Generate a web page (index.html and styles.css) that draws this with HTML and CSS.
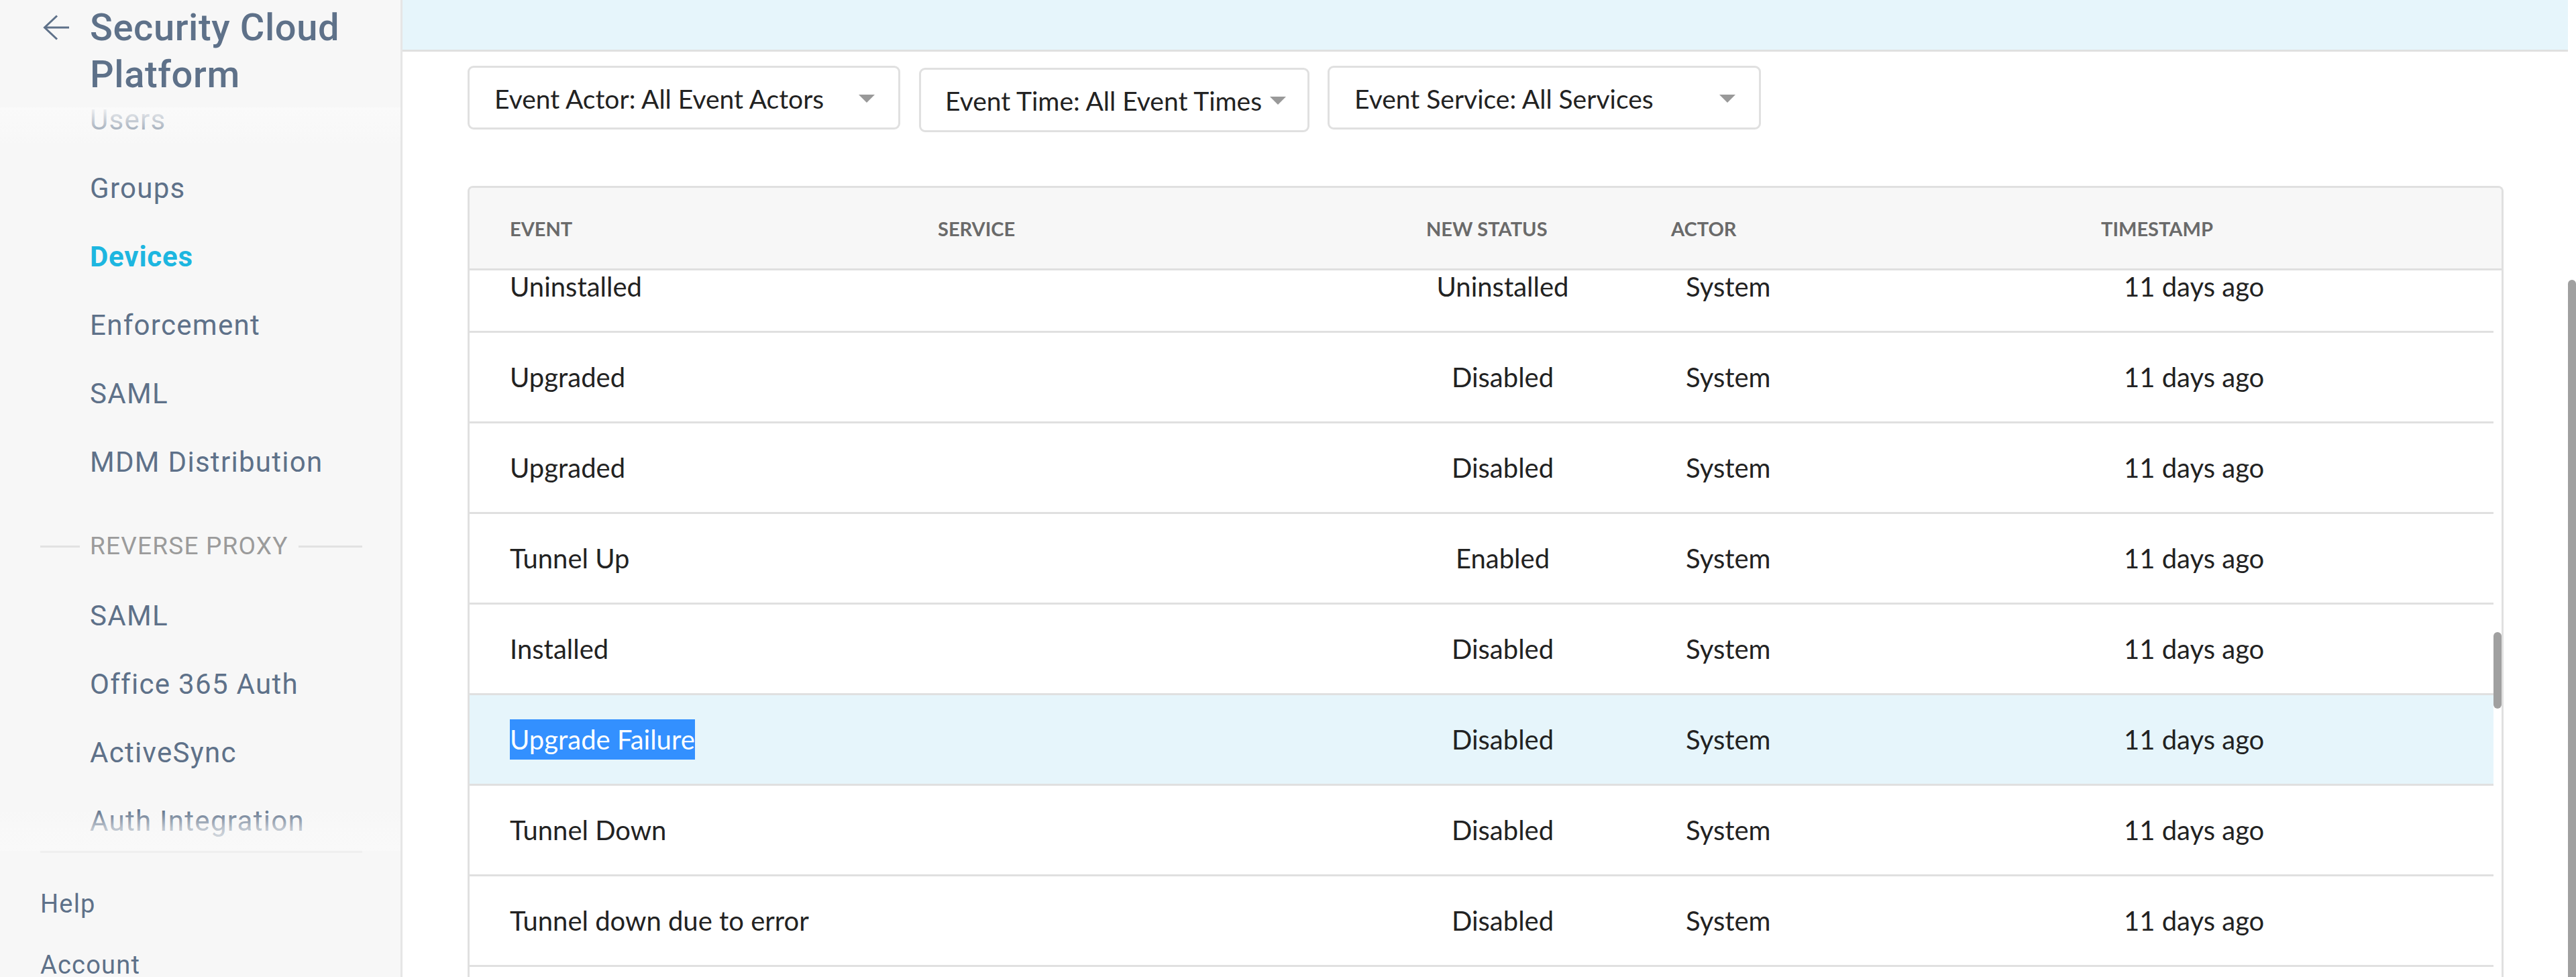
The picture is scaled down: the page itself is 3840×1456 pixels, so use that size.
FILE: index.html
```html
<!DOCTYPE html>
<html lang="en">
<head>
<meta charset="utf-8">
<title>Security Cloud Platform – Device Events</title>
<link rel="stylesheet" href="styles.css">
</head>
<body>
<div class="app">
  <aside class="sidebar">
    <div class="brand">
      <svg class="back" viewBox="0 0 40 40" width="40" height="40" aria-hidden="true">
        <path d="M39 19H2.5M21 1.5L2.5 19L21 36.5" fill="none" stroke="currentColor" stroke-width="3"/>
      </svg>
      <h1 class="brand-title">Security Cloud<br>Platform</h1>
    </div>
    <nav class="nav">
      <div class="nav-list">
        <a class="nav-item">Users</a>
        <a class="nav-item">Groups</a>
        <a class="nav-item is-active">Devices</a>
        <a class="nav-item">Enforcement</a>
        <a class="nav-item">SAML</a>
        <a class="nav-item">MDM Distribution</a>
        <div class="nav-section">REVERSE PROXY</div>
        <a class="nav-item">SAML</a>
        <a class="nav-item">Office 365 Auth</a>
        <a class="nav-item">ActiveSync</a>
        <a class="nav-item">Auth Integration</a>
      </div>
    </nav>
    <div class="sidebar-footer">
      <a class="foot-item">Help</a>
      <a class="foot-item">Account</a>
    </div>
  </aside>

  <main class="main">
    <div class="topbar"></div>
    <div class="content">
      <div class="filters">
        <div class="select select-actor"><span>Event Actor: All Event Actors</span><i class="caret"></i></div>
        <div class="select select-time"><span>Event Time: All Event Times</span><i class="caret"></i></div>
        <div class="select select-service"><span>Event Service: All Services</span><i class="caret"></i></div>
      </div>

      <div class="table">
        <div class="thead">
          <div class="th">Event</div>
          <div class="th">Service</div>
          <div class="th">New Status</div>
          <div class="th">Actor</div>
          <div class="th">Timestamp</div>
        </div>
        <div class="tbody">
          <div class="rows">
            <div class="tr"><div class="td td-event">Uninstalled</div><div class="td"></div><div class="td td-status">Uninstalled</div><div class="td td-actor">System</div><div class="td">11 days ago</div></div>
            <div class="tr"><div class="td td-event">Upgraded</div><div class="td"></div><div class="td td-status">Disabled</div><div class="td td-actor">System</div><div class="td">11 days ago</div></div>
            <div class="tr"><div class="td td-event">Upgraded</div><div class="td"></div><div class="td td-status">Disabled</div><div class="td td-actor">System</div><div class="td">11 days ago</div></div>
            <div class="tr"><div class="td td-event">Tunnel Up</div><div class="td"></div><div class="td td-status">Enabled</div><div class="td td-actor">System</div><div class="td">11 days ago</div></div>
            <div class="tr"><div class="td td-event">Installed</div><div class="td"></div><div class="td td-status">Disabled</div><div class="td td-actor">System</div><div class="td">11 days ago</div></div>
            <div class="tr is-hover"><div class="td td-event"><span class="selected-text">Upgrade Failure</span></div><div class="td"></div><div class="td td-status">Disabled</div><div class="td td-actor">System</div><div class="td">11 days ago</div></div>
            <div class="tr"><div class="td td-event">Tunnel Down</div><div class="td"></div><div class="td td-status">Disabled</div><div class="td td-actor">System</div><div class="td">11 days ago</div></div>
            <div class="tr"><div class="td td-event">Tunnel down due to error</div><div class="td"></div><div class="td td-status">Disabled</div><div class="td td-actor">System</div><div class="td">11 days ago</div></div>
          </div>
          <div class="vscroll"><div class="vthumb"></div></div>
        </div>
      </div>
    </div>
  </main>

  <div class="page-scroll"><div class="page-thumb"></div></div>
</div>
</body>
</html>
```

FILE: styles.css
```css
* { box-sizing: border-box; }

html, body {
  margin: 0;
  height: 1456px;
  overflow: hidden;
  background: #ffffff;
  font-family: Lato, "Liberation Sans", sans-serif;
}

.app {
  display: flex;
  width: 3840px;
  height: 1456px;
}

/* ---------- Sidebar ---------- */
.sidebar {
  width: 600px;
  flex: 0 0 600px;
  height: 1456px;
  background: #f7f7f7;
  border-right: 3px solid #e6e6e6;
  display: flex;
  flex-direction: column;
  font-family: Roboto, "Liberation Sans", sans-serif;
  color: #5e7189;
  overflow: hidden;
}

.brand {
  height: 160px;
  flex: 0 0 160px;
  display: flex;
  align-items: flex-start;
  padding: 6px 0 0 64px;
}

.back {
  margin-top: 16px;
  color: #5e7189;
  flex: 0 0 40px;
}

.brand-title {
  margin: 0 0 0 30px;
  font-size: 56px;
  font-weight: 500;
  line-height: 70px;
  letter-spacing: 0.6px;
  color: #5e7189;
}

.nav {
  position: relative;
  height: 1108px;
  flex: 0 0 1108px;
  overflow: hidden;
}

.nav::before,
.nav::after {
  content: "";
  position: absolute;
  left: 0;
  right: 0;
  z-index: 1;
  pointer-events: none;
}

.nav::before {
  top: 0;
  height: 58px;
  background: linear-gradient(to bottom, rgba(250,250,250,0.95), rgba(250,250,250,0.45) 60%, rgba(250,250,250,0));
}

.nav::after {
  bottom: 0;
  height: 62px;
  background: linear-gradient(to bottom, rgba(249,249,249,0), rgba(249,249,249,0.6) 45%, rgba(249,249,249,0.95));
}

.nav-list {
  margin-top: -32px;
}

.nav-item {
  display: block;
  height: 102px;
  line-height: 102px;
  padding-left: 134px;
  font-size: 42px;
  letter-spacing: 1.3px;
  color: #5e7189;
  white-space: nowrap;
}

.nav-item.is-active {
  color: #1db6e0;
  font-weight: 700;
  letter-spacing: 0.8px;
}

.nav-section {
  display: flex;
  align-items: center;
  height: 38px;
  margin: 55px 57px 34px 60px;
  font-size: 37px;
  line-height: 38px;
  letter-spacing: 1.2px;
  color: #9b9b9b;
  white-space: nowrap;
}

.nav-section::before,
.nav-section::after {
  content: "";
  height: 3px;
  background: #e2e2e2;
}

.nav-section::before {
  width: 59px;
  flex: 0 0 59px;
  margin-right: 15px;
}

.nav-section::after {
  flex: 1;
  margin-left: 15px;
}

.sidebar-footer {
  margin: 0 57px 0 60px;
  border-top: 3px solid #efefef;
  padding-top: 31px;
}

.foot-item {
  display: block;
  height: 91px;
  line-height: 91px;
  font-size: 38px;
  letter-spacing: 1.2px;
  color: #5e7189;
}

/* ---------- Main ---------- */
.main {
  width: 3228px;
  flex: 0 0 3228px;
  display: flex;
  flex-direction: column;
}

.topbar {
  height: 77px;
  flex: 0 0 77px;
  background: #e6f5fb;
  border-bottom: 3px solid #e0e0e0;
}

.content {
  padding: 21px 96px 0 97px;
}

.filters {
  display: flex;
  align-items: flex-start;
  height: 99px;
}

.select {
  height: 95px;
  border: 3px solid #e0e0e0;
  border-radius: 9px;
  padding: 2px 35px 0 37px;
  display: flex;
  align-items: center;
  justify-content: space-between;
  font-size: 39px;
  color: #222222;
  white-space: nowrap;
  background: #fff;
}

.select-actor {
  width: 645px;
}

.select-time {
  width: 582px;
  margin-left: 28px;
  margin-top: 3px;
  height: 96px;
  padding-left: 36px;
  padding-right: 34px;
}

.select-service {
  width: 646px;
  margin-left: 27px;
}

.caret {
  flex: 0 0 auto;
  width: 0;
  height: 0;
  margin-left: 12px;
  border-left: 12px solid transparent;
  border-right: 12px solid transparent;
  border-top: 12px solid #999999;
}

/* ---------- Table ---------- */
.table {
  margin-top: 80px;
  border: 3px solid #e0e0e0;
  border-bottom: none;
  border-radius: 8px 8px 0 0;
  overflow: hidden;
}

.thead,
.tr {
  display: grid;
}

.thead {
  grid-template-columns: 638px 728px 365px 641px 1fr;
  height: 123px;
  background: #f7f7f7;
  border-bottom: 3px solid #e0e0e0;
}

.th {
  display: flex;
  align-items: center;
  padding-left: 60px;
  font-size: 29px;
  font-weight: 700;
  color: #6a6a6a;
  text-transform: uppercase;
  white-space: nowrap;
}

.tbody {
  display: flex;
  height: 1100px;
  overflow: hidden;
}

.rows {
  flex: 1;
  margin-top: -42px;
}

.tr {
  grid-template-columns: 638px 728px 348px 752px 1fr;
  height: 135px;
  border-bottom: 3px solid #e0e0e0;
  background: #ffffff;
}

.tr.is-hover {
  background: #e6f5fb;
}

.td {
  display: flex;
  align-items: center;
  font-size: 40px;
  color: #222222;
  white-space: nowrap;
}

.td-event {
  padding-left: 60px;
}

.td-status {
  justify-content: center;
}

.td-actor {
  padding-left: 99px;
}

.selected-text {
  display: inline-block;
  line-height: 60px;
  background: #3390ff;
  color: #ffffff;
}

.vscroll {
  width: 12px;
  flex: 0 0 12px;
  padding-top: 539px;
  background: #ffffff;
}

.vthumb {
  height: 114px;
  border-radius: 6px;
  background: #a0a0a0;
}

/* ---------- Page scrollbar ---------- */
.page-scroll {
  width: 12px;
  flex: 0 0 12px;
  padding-top: 417px;
  background: #ffffff;
}

.page-thumb {
  height: 1039px;
  border-radius: 6px 6px 0 0;
  background: #a0a0a0;
}
```
